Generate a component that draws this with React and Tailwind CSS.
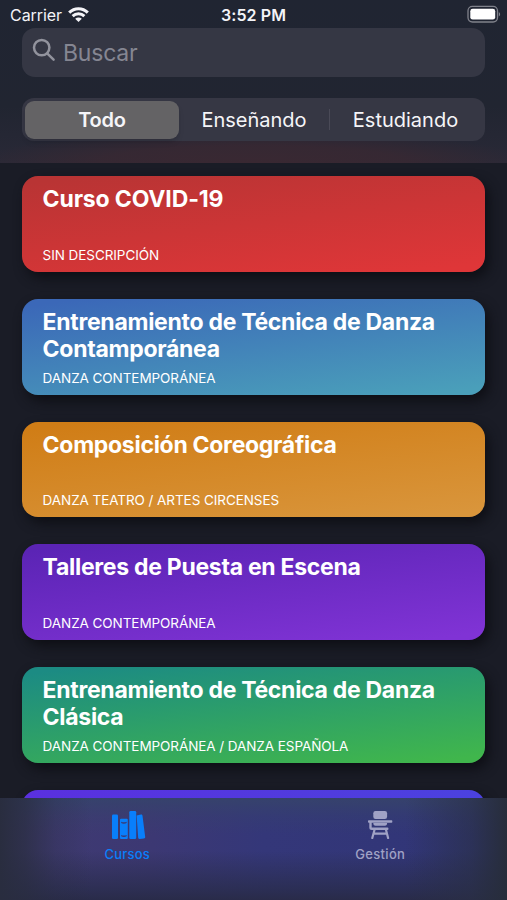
const courses = [
  { title: ['Curso COVID-19'], note: 'SIN DESCRIPCIÓN', color: 'bg-[linear-gradient(173deg,#b93434_5%,#df3638_95%)]', spacing: 'tracking-[-0.15px]' },
  { title: ['Entrenamiento de Técnica de Danza', 'Contamporánea'], note: 'DANZA CONTEMPORÁNEA', color: 'bg-[linear-gradient(173deg,#3b68b8_5%,#4a9fba_95%)]' },
  { title: ['Composición Coreográfica'], note: 'DANZA TEATRO / ARTES CIRCENSES', color: 'bg-[linear-gradient(173deg,#d07d16_5%,#d9953b_95%)]' },
  { title: ['Talleres de Puesta en Escena'], note: 'DANZA CONTEMPORÁNEA', color: 'bg-[linear-gradient(173deg,#5b24b5_5%,#8033d5_95%)]' },
  { title: ['Entrenamiento de Técnica de Danza', 'Clásica'], note: 'DANZA CONTEMPORÁNEA / DANZA ESPAÑOLA', color: 'bg-[linear-gradient(173deg,#1c8b83_5%,#40b64c_95%)]' },
  { title: [], note: '', color: 'bg-[linear-gradient(90deg,#5a30df,#4b42df)]' },
];

function StatusBar() {
  return (
    <div className="grid h-7 grid-cols-3 items-start pt-[5px] text-[16px] leading-5 text-[#f4f4f8]">
      <div className="flex items-center gap-[6px] pl-[10px]">
        <span className="tracking-[-0.05px]">Carrier</span>
        <svg width="21" height="15" viewBox="0 0 21 15" fill="none" stroke="currentColor" strokeWidth="3" className="-mt-px">
          <path d="M1.2 5.6C6.4.3 14.6.3 19.8 5.6M4.6 9.1c3.4-3.3 8.4-3.3 11.8 0" />
          <path d="M7.2 11.7c1.9-1.7 4.7-1.7 6.6 0L10.5 15z" fill="currentColor" stroke="none" />
        </svg>
      </div>
      <span className="text-center font-semibold tracking-[0.1px]">3:52 PM</span>
      <div className="flex justify-end pr-[6px]">
        <svg width="34" height="18" viewBox="0 0 34 18">
          <rect x="1" y="1.4" width="29.5" height="15.6" rx="4.4" fill="none" stroke="#80828b" strokeWidth="1.3" />
          <rect x="3.3" y="3.8" width="24.9" height="10.8" rx="2.4" fill="#fff" />
          <path d="M31.8 7c1.8.7 1.8 3.8 0 4.5z" fill="#80828b" />
        </svg>
      </div>
    </div>
  );
}

function Header() {
  return (
    <header className="h-[163px] shrink-0 bg-[radial-gradient(ellipse_280px_32px_at_50%_100%,#392832_0%,#392832cc_55%,transparent_100%),linear-gradient(#202532_0%,#212531_65%,#292937_100%)]">
      <StatusBar />
      <div className="mr-[22px] ml-[22.4px] flex h-[48.5px] items-center rounded-[13px] bg-[#353744] pl-[9.6px] text-[#858692]">
        <svg width="24" height="24" viewBox="0 0 24 24" fill="none" stroke="#92939d" strokeWidth="2.5" strokeLinecap="round" className="mb-[4px]">
          <circle cx="9.7" cy="9.6" r="7.7" />
          <path d="m15.4 15.6 6.2 6" />
        </svg>
        <span className="ml-[7px] pt-px text-[23px] leading-7 tracking-[-0.2px]">Buscar</span>
      </div>
      <div className="mr-[22px] ml-[22.4px] mt-[21.5px] flex h-[43px] items-center rounded-[12px] bg-[#363744] p-[2px] text-[20px] text-[#f5f5f8]">
        <div className="ml-[0.6px] flex h-[38px] w-[154px] items-center justify-center rounded-[9px] bg-[#646365] font-semibold tracking-[-0.2px] shadow-md">Todo</div>
        <div className="flex flex-1 items-center justify-center">Enseñando</div>
        <div className="h-[21px] w-px bg-[#4a4a57]" />
        <div className="flex w-[153px] items-center justify-center pr-[2px]">Estudiando</div>
      </div>
    </header>
  );
}

function Course({ title, note, color, spacing = 'tracking-[-0.29px]' }) {
  return (
    <article className={`flex h-[95.7px] shrink-0 flex-col justify-between rounded-[16px] pt-[10px] pb-[7px] pl-[20.3px] text-white shadow-[4px_6px_12px_#0e0f15] ${color}`}>
      <h2 className={`text-[23px] leading-[27px] font-bold whitespace-nowrap ${spacing}`}>
        {title.map((line) => <span key={line} className="block">{line}</span>)}
      </h2>
      <p className="text-[13.5px] leading-5 tracking-[-0.07px] whitespace-nowrap">{note}</p>
    </article>
  );
}

function Books() {
  return (
    <svg width="34" height="28" viewBox="0 0 34 28" fill="currentColor">
      <rect y="3.5" width="6" height="24.5" rx="1.3" />
      <path fillRule="evenodd" d="M9 7.7h5.8q1 0 1 1V27q0 1-1 1H9q-1 0-1-1V8.700q0-1 1-1m.2 3V12c1.500.9 3.900.9 5.400 0v-1.300c-1.500.7-3.900.7-5.400 0m0 13.300v1.300c1.500.9 3.900.9 5.400 0V24c-1.500.7-3.900.7-5.400 0" />
      <rect x="17.3" width="6.9" height="28" rx="1.3" />
      <path d="m24.6 4.400 4.400-.8c.8-.1 1.400.4 1.500 1.200L33.200 26c.1.800-.4 1.400-1.200 1.500l-4.300.4c-.8.1-1.400-.4-1.500-1.200z" />
    </svg>
  );
}

function Chair() {
  return (
    <svg width="25" height="28" viewBox="0 0 25 28" fill="currentColor">
      <rect x="5.3" width="13.8" height="8" rx="2.2" />
      <rect y="9.2" width="24.3" height="2.5" rx=".7" />
      <path d="M5.300 12h13.800q0 2.700-2.200 2.700H7.500q-2.200 0-2.200-2.700" />
      <path d="M1.300 11h2.400v5.500h15.700q1.100 0 1.100 1.300t-1.100 1.300H3.800q-2.500 0-2.500-2.500z" />
      <path d="M6.600 18.500 4.300 27M17.900 18.500l2.200 8.500M5.800 22.700h13" fill="none" stroke="currentColor" strokeWidth="2.2" strokeLinecap="round" />
    </svg>
  );
}

function TabBar() {
  return (
    <nav className="grid h-[102px] shrink-0 grid-cols-2 bg-[linear-gradient(90deg,#292d3f_0%,#292d3fbb_5%,#292d3f44_11%,transparent_18%,transparent_80%,#292f4399_93%,#272d3b_100%),linear-gradient(#36426c_0%,#36426c55_18%,transparent_36%,transparent_52%,#292c4bcc_90%,#292b49_100%),linear-gradient(90deg,#403b72_0%,#3c3873_30%,#343779_52%,#303577)] text-[13px] leading-4 font-medium">
      <div className="flex flex-col items-center gap-[7px] pt-[12.7px] pl-px text-[#097ffb]">
        <span className="pl-1"><Books /></span>
        <span className="tracking-[0.2px]">Cursos</span>
      </div>
      <div className="flex flex-col items-center gap-[7px] pt-[12.7px] text-[#a0a2c5]">
        <Chair />
        <span className="tracking-[0.3px]">Gestión</span>
      </div>
    </nav>
  );
}

export default function App() {
  return (
    <div className="flex h-[900px] w-[507px] flex-col overflow-hidden bg-[#1a1c26] font-[Inter,sans-serif]">
      <Header />
      <main className="flex min-h-0 flex-1 flex-col gap-[27px] overflow-hidden pt-[13.4px] pr-[22px] pl-[22.3px]">
        {courses.map((course, i) => <Course key={i} {...course} />)}
      </main>
      <TabBar />
    </div>
  );
}
